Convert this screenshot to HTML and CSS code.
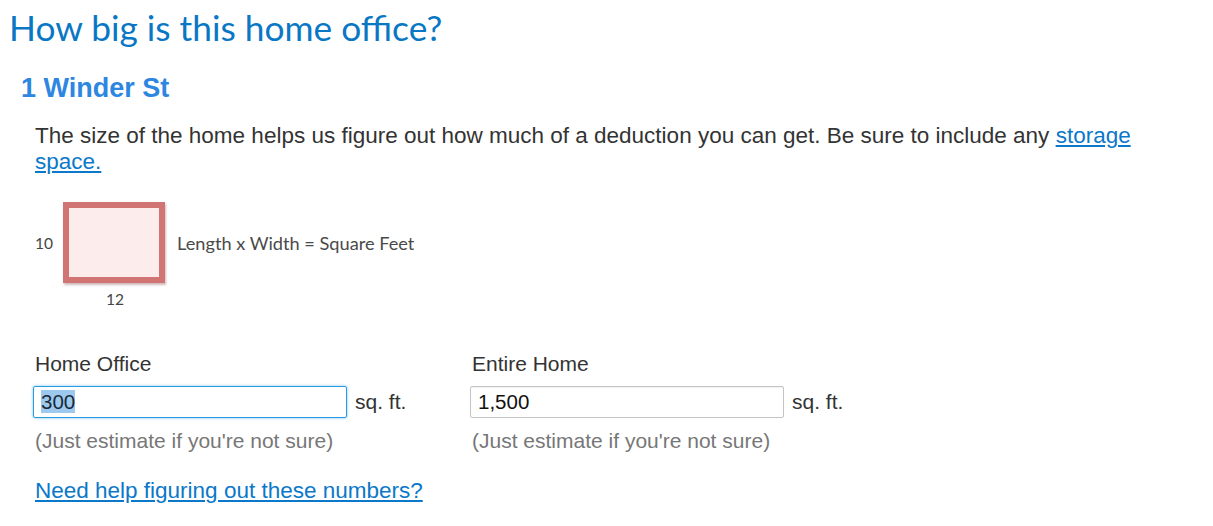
FILE: index.html
```html
<!DOCTYPE html>
<html>
<head>
<meta charset="utf-8">
<link rel="stylesheet" href="styles.css">
</head>
<body>
<h1 class="title">How big is this home office?</h1>
<h2 class="address">1 Winder St</h2>
<div class="content">
  <p class="intro">The size of the home helps us figure out how much of a deduction you can get. Be sure to include any <a href="#" class="link">storage space.</a></p>
  <div class="diagram">
    <div class="diagram-row">
      <span class="dim dim-side">10</span>
      <div class="room"></div>
      <span class="formula">Length x Width = Square Feet</span>
    </div>
    <div class="dim dim-bottom">12</div>
  </div>
  <div class="fields">
    <div class="field">
      <label class="field-label">Home Office</label>
      <div class="field-row">
        <div class="input focused"><span class="selected">300</span></div>
        <span class="unit">sq. ft.</span>
      </div>
      <div class="hint">(Just estimate if you're not sure)</div>
    </div>
    <div class="field">
      <label class="field-label">Entire Home</label>
      <div class="field-row">
        <div class="input">1,500</div>
        <span class="unit">sq. ft.</span>
      </div>
      <div class="hint">(Just estimate if you're not sure)</div>
    </div>
  </div>
  <a href="#" class="link help">Need help figuring out these numbers?</a>
</div>
</body>
</html>
```
FILE: styles.css
```css
html, body {
  margin: 0;
  padding: 0;
  background: #ffffff;
}
body {
  padding: 0 0 0 9px;
  font-family: "Liberation Sans", Arial, sans-serif;
  color: #333333;
}
.title {
  margin: 0;
  padding-top: 7px;
  font-family: Lato, "Noto Sans", sans-serif;
  font-weight: 400;
  font-size: 35.3px;
  line-height: 42px;
  color: #0a77c5;
}
.address {
  margin: 23px 0 0 12px;
  font-size: 27px;
  line-height: 32px;
  font-weight: 700;
  color: #2d86e0;
}
.content {
  padding-left: 26px;
}
.intro {
  margin: 19px 0 0 0;
  font-size: 22.5px;
  line-height: 26px;
  color: #333333;
  max-width: 1120px;
}
.link {
  color: #0b78c9;
  text-decoration: underline;
}
.diagram {
  margin-top: 27px;
  width: 420px;
}
.diagram-row {
  display: flex;
  align-items: center;
}
.dim {
  font-family: Lato, "Noto Sans", sans-serif;
  font-size: 15.5px;
  color: #444444;
}
.dim-side {
  width: 28px;
}
.room {
  width: 90px;
  height: 69px;
  border: 6px solid #d07474;
  background: #fdecec;
  box-shadow: 1px 2px 2px rgba(120, 60, 60, 0.35);
}
.formula {
  margin-left: 12px;
  font-family: Lato, "Noto Sans", sans-serif;
  font-size: 18.2px;
  color: #4a4a4a;
}
.dim-bottom {
  margin: 7px 0 0 71px;
}
.fields {
  margin-top: 44px;
  display: flex;
}
.field {
  width: 437px;
}
.field-label {
  display: block;
  font-size: 21px;
  line-height: 24px;
  color: #333333;
}
.field-row {
  margin-top: 10px;
  margin-left: -2px;
  display: flex;
  align-items: center;
}
.input {
  box-sizing: border-box;
  width: 314px;
  height: 32px;
  border: 1px solid #c4c4c4;
  border-radius: 2px;
  padding: 0 7px;
  font-size: 20.5px;
  line-height: 30px;
  color: #111111;
  box-shadow: inset 0 1px 1px rgba(0, 0, 0, 0.06);
}
.input.focused {
  border-color: #2a9be0;
  box-shadow: 0 0 3px rgba(40, 150, 230, 0.6);
}
.selected {
  background: #9ec9ee;
  color: #1a2a3a;
}
.unit {
  margin-left: 8px;
  font-size: 21px;
  color: #333333;
}
.hint {
  margin-top: 11px;
  font-size: 21px;
  line-height: 24px;
  color: #777777;
}
.help {
  display: inline-block;
  margin-top: 25px;
  font-size: 22.5px;
  line-height: 26px;
}
```
